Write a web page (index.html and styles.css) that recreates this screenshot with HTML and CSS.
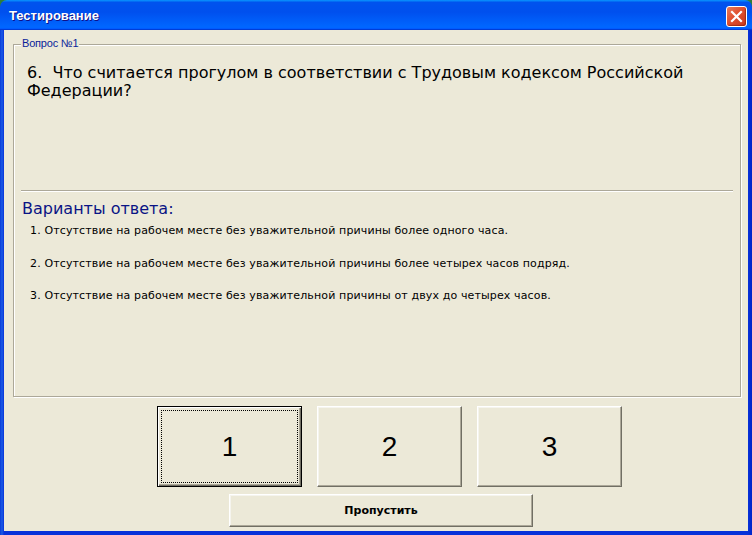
FILE: index.html
```html
<!DOCTYPE html>
<html lang="ru">
<head>
<meta charset="utf-8">
<title>Тестирование</title>
<link rel="stylesheet" href="styles.css">
</head>
<body>
<div class="window">
  <div class="titlebar">
    <span class="title">Тестирование</span>
    <button class="close" aria-label="Закрыть">
      <svg width="13" height="13" viewBox="0 0 13 13"><path d="M2 2 L11 11 M11 2 L2 11" stroke="#fff" stroke-width="2.2" stroke-linecap="square"/></svg>
    </button>
  </div>
  <div class="frame">
    <div class="content">
      <div class="group">
        <span class="legend">Вопрос №1</span>
        <div class="question">6.&nbsp; Что считается прогулом в соответствии с Трудовым кодексом Российской Федерации?</div>
        <div class="sep"></div>
        <div class="variants-title">Варианты ответа:</div>
        <div class="answers">
          <div class="answer">1. Отсутствие на рабочем месте без уважительной причины более одного часа.</div>
          <div class="answer">2. Отсутствие на рабочем месте без уважительной причины более четырех часов подряд.</div>
          <div class="answer">3. Отсутствие на рабочем месте без уважительной причины от двух до четырех часов.</div>
        </div>
      </div>
      <div class="choices">
        <button class="btn big focused"><span class="focus-rect">1</span></button>
        <button class="btn big"><span class="label">2</span></button>
        <button class="btn big"><span class="label">3</span></button>
      </div>
      <div class="skip-row">
        <button class="btn skip">Пропустить</button>
      </div>
    </div>
  </div>
</div>
</body>
</html>
```

FILE: styles.css
```css
* { box-sizing: border-box; }
html, body { margin: 0; padding: 0; }
body {
  width: 752px;
  height: 535px;
  overflow: hidden;
  background: #2f7d3a;
  font-family: "DejaVu Sans", sans-serif;
}
.window {
  width: 752px;
  height: 535px;
  display: flex;
  flex-direction: column;
}
.titlebar {
  height: 30px;
  flex: none;
  display: flex;
  align-items: flex-start;
  justify-content: space-between;
  padding: 0 5px 0 9px;
  border-radius: 7px 7px 0 0;
  background: linear-gradient(180deg, #0997ff, #0053ee 8%, #0050ee 40%, #0066ff 88%, #0066ff 93%, #005bff 95%, #003dd7 96%, #003dd7);
}
.title {
  margin-top: 8px;
  font-family: "Liberation Sans", Arial, sans-serif;
  font-weight: bold;
  font-size: 13px;
  line-height: 15px;
  color: #fff;
  text-shadow: 1px 1px 0 #0f1089;
}
.close {
  margin-top: 6px;
  width: 21px;
  height: 21px;
  padding: 0;
  border: 1px solid #fff;
  border-radius: 3px;
  background: linear-gradient(135deg, #e87b5a 0%, #e0502f 45%, #c9381c 100%);
  display: flex;
  align-items: center;
  justify-content: center;
  box-shadow: inset -1px -1px 1px rgba(120,20,0,0.5);
}
.close svg { display: block; }
.frame {
  flex: 1;
  display: flex;
  padding: 0 4px 4px 4px;
  background: linear-gradient(90deg, #0a3ad8 0, #1a5be6 2px, #0831d9 4px, #0831d9 calc(100% - 4px), #0026c8 100%);
}
.content {
  flex: 1;
  background: #ece9d8;
  display: flex;
  flex-direction: column;
}
.group {
  position: relative;
  margin: 14px 7px 0 9px;
  width: 728px;
  height: 353px;
  border: 1px solid #aca899;
  box-shadow: 1px 1px 0 #fff, inset 1px 1px 0 #fff;
  flex: none;
}
.legend {
  position: absolute;
  left: 7px;
  top: -8px;
  padding: 0 1px;
  background: #ece9d8;
  font-family: "Liberation Sans", Arial, sans-serif;
  font-size: 11px;
  line-height: 13px;
  letter-spacing: -0.2px;
  color: #0a1e9a;
}
.question {
  margin: 19px 8px 0 13px;
  height: 126px;
  font-size: 16px;
  line-height: 18px;
  color: #000;
}
.sep {
  margin-left: 7px;
  width: 712px;
  height: 2px;
  border-top: 1px solid #aca899;
  border-bottom: 1px solid #fff;
}
.variants-title {
  margin: 8px 0 0 8px;
  font-size: 16px;
  line-height: 18px;
  color: #0a1485;
}
.answers {
  margin: 6px 0 0 16px;
  display: flex;
  flex-direction: column;
  gap: 19.5px;
}
.answer {
  font-size: 11px;
  line-height: 13px;
  letter-spacing: 0.13px;
  color: #000;
}
.btn {
  font: inherit;
  background: #ece9d8;
  color: #000;
  padding: 0;
  border: 1px solid;
  border-color: #fff #716f64 #716f64 #fff;
  box-shadow: inset -1px -1px 0 #aca899, inset 1px 1px 0 #f5f4ee;
}
.choices {
  margin: 9px 0 0 153px;
  display: flex;
  gap: 15px;
}
.big {
  width: 145px;
  height: 81px;
  display: flex;
  padding: 3px;
  font-family: "Liberation Sans", Arial, sans-serif;
  font-size: 28px;
}
.big .label, .big .focus-rect {
  flex: 1;
  display: flex;
  align-items: center;
  justify-content: center;
  border: 1px dotted transparent;
}
.big.focused {
  border: 1px solid #000;
  box-shadow: inset 1px 1px 0 #fff, inset -1px -1px 0 #716f64, inset -2px -2px 0 #aca899;
}
.big .focus-rect { border-color: #000; }
.skip-row {
  margin: 7px 0 0 225px;
  display: flex;
}
.skip {
  width: 304px;
  height: 33px;
  font-family: "DejaVu Sans", sans-serif;
  font-weight: bold;
  font-size: 11px;
  line-height: 13px;
}
```
